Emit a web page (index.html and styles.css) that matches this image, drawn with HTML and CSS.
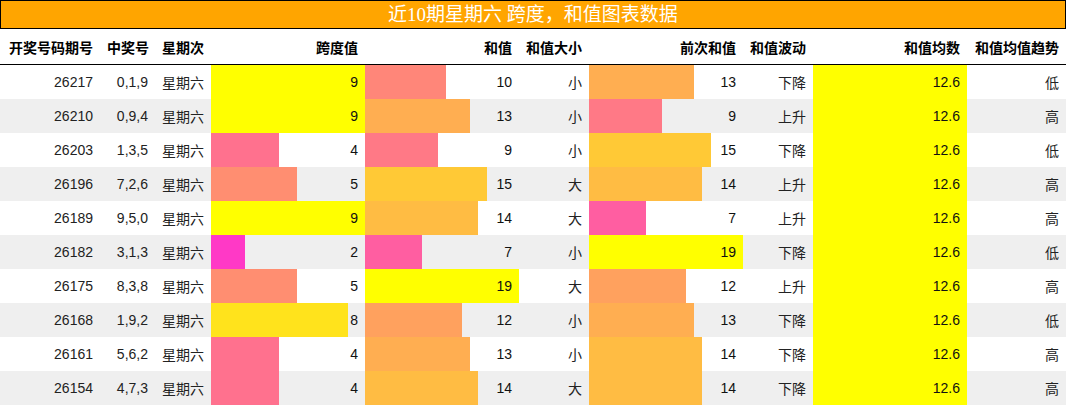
FILE: index.html
```html
<!DOCTYPE html>
<html lang="zh">
<head>
<meta charset="utf-8">
<title>近10期星期六 跨度，和值图表数据</title>
<link rel="stylesheet" href="styles.css">
</head>
<body>
<div class="title">近10期星期六 跨度，和值图表数据</div>
<table class="data">
  <colgroup>
    <col class="c-issue"><col class="c-num"><col class="c-day"><col class="c-bar"><col class="c-bar"><col class="c-mid"><col class="c-bar"><col class="c-mid"><col class="c-bar"><col class="c-trend">
  </colgroup>
  <thead>
    <tr><th>开奖号码期号</th><th>中奖号</th><th>星期次</th><th>跨度值</th><th>和值</th><th>和值大小</th><th>前次和值</th><th>和值波动</th><th>和值均数</th><th>和值均值趋势</th></tr>
  </thead>
  <tbody>
    <tr><td>26217</td><td>0,1,9</td><td>星期六</td><td class="bar" style="--w:100%;--c:rgb(255,255,0)">9</td><td class="bar" style="--w:52.6%;--c:rgb(255,134,121)">10</td><td>小</td><td class="bar" style="--w:68.4%;--c:rgb(255,174,81)">13</td><td>下降</td><td class="bar" style="--w:100%;--c:rgb(255,255,0)">12.6</td><td>低</td></tr>
    <tr><td>26210</td><td>0,9,4</td><td>星期六</td><td class="bar" style="--w:100%;--c:rgb(255,255,0)">9</td><td class="bar" style="--w:68.4%;--c:rgb(255,174,81)">13</td><td>小</td><td class="bar" style="--w:47.4%;--c:rgb(255,121,134)">9</td><td>上升</td><td class="bar" style="--w:100%;--c:rgb(255,255,0)">12.6</td><td>高</td></tr>
    <tr><td>26203</td><td>1,3,5</td><td>星期六</td><td class="bar" style="--w:44.4%;--c:rgb(255,113,142)">4</td><td class="bar" style="--w:47.4%;--c:rgb(255,121,134)">9</td><td>小</td><td class="bar" style="--w:78.9%;--c:rgb(255,201,54)">15</td><td>下降</td><td class="bar" style="--w:100%;--c:rgb(255,255,0)">12.6</td><td>低</td></tr>
    <tr><td>26196</td><td>7,2,6</td><td>星期六</td><td class="bar" style="--w:55.6%;--c:rgb(255,142,113)">5</td><td class="bar" style="--w:78.9%;--c:rgb(255,201,54)">15</td><td>大</td><td class="bar" style="--w:73.7%;--c:rgb(255,188,67)">14</td><td>上升</td><td class="bar" style="--w:100%;--c:rgb(255,255,0)">12.6</td><td>高</td></tr>
    <tr><td>26189</td><td>9,5,0</td><td>星期六</td><td class="bar" style="--w:100%;--c:rgb(255,255,0)">9</td><td class="bar" style="--w:73.7%;--c:rgb(255,188,67)">14</td><td>大</td><td class="bar" style="--w:36.8%;--c:rgb(255,94,161)">7</td><td>上升</td><td class="bar" style="--w:100%;--c:rgb(255,255,0)">12.6</td><td>高</td></tr>
    <tr><td>26182</td><td>3,1,3</td><td>星期六</td><td class="bar" style="--w:22.2%;--c:rgb(255,57,198)">2</td><td class="bar" style="--w:36.8%;--c:rgb(255,94,161)">7</td><td>小</td><td class="bar" style="--w:100%;--c:rgb(255,255,0)">19</td><td>下降</td><td class="bar" style="--w:100%;--c:rgb(255,255,0)">12.6</td><td>低</td></tr>
    <tr><td>26175</td><td>8,3,8</td><td>星期六</td><td class="bar" style="--w:55.6%;--c:rgb(255,142,113)">5</td><td class="bar" style="--w:100%;--c:rgb(255,255,0)">19</td><td>大</td><td class="bar" style="--w:63.2%;--c:rgb(255,161,94)">12</td><td>上升</td><td class="bar" style="--w:100%;--c:rgb(255,255,0)">12.6</td><td>高</td></tr>
    <tr><td>26168</td><td>1,9,2</td><td>星期六</td><td class="bar" style="--w:88.9%;--c:rgb(255,227,28)">8</td><td class="bar" style="--w:63.2%;--c:rgb(255,161,94)">12</td><td>小</td><td class="bar" style="--w:68.4%;--c:rgb(255,174,81)">13</td><td>下降</td><td class="bar" style="--w:100%;--c:rgb(255,255,0)">12.6</td><td>低</td></tr>
    <tr><td>26161</td><td>5,6,2</td><td>星期六</td><td class="bar" style="--w:44.4%;--c:rgb(255,113,142)">4</td><td class="bar" style="--w:68.4%;--c:rgb(255,174,81)">13</td><td>小</td><td class="bar" style="--w:73.7%;--c:rgb(255,188,67)">14</td><td>下降</td><td class="bar" style="--w:100%;--c:rgb(255,255,0)">12.6</td><td>高</td></tr>
    <tr><td>26154</td><td>4,7,3</td><td>星期六</td><td class="bar" style="--w:44.4%;--c:rgb(255,113,142)">4</td><td class="bar" style="--w:73.7%;--c:rgb(255,188,67)">14</td><td>大</td><td class="bar" style="--w:73.7%;--c:rgb(255,188,67)">14</td><td>下降</td><td class="bar" style="--w:100%;--c:rgb(255,255,0)">12.6</td><td>高</td></tr>
  </tbody>
</table>
</body>
</html>
```
FILE: styles.css
```css
html, body {
  margin: 0;
  padding: 0;
  background: #fff;
}
body {
  width: 1066px;
  font-family: "Liberation Sans", "Noto Sans CJK SC", sans-serif;
  font-size: 14px;
  color: #222;
}
.title {
  box-sizing: border-box;
  height: 29px;
  background: #ffa500;
  border: 1px solid #000;
  color: #fff;
  font-family: "Liberation Serif", "Noto Sans CJK SC", serif;
  font-size: 19px;
  line-height: 27px;
  text-align: center;
}
.data {
  width: 1066px;
  table-layout: fixed;
  border-collapse: separate;
  border-spacing: 0;
}
.c-issue { width: 100px; }
.c-num { width: 55px; }
.c-day { width: 56px; }
.c-bar { width: 154px; }
.c-mid { width: 70px; }
.c-trend { width: 99px; }
.data th,
.data td {
  padding: 0 7px;
  height: 34px;
  text-align: right;
  white-space: nowrap;
  overflow: hidden;
}
.data th {
  height: 35px;
  font-weight: bold;
  color: #000;
  border-bottom: 1px solid #000;
}
.data tbody tr:nth-child(even) {
  background: #efefef;
}
.data td.bar {
  background: linear-gradient(to right, var(--c) 0, var(--c) var(--w), transparent var(--w));
  color: #111;
}
```
